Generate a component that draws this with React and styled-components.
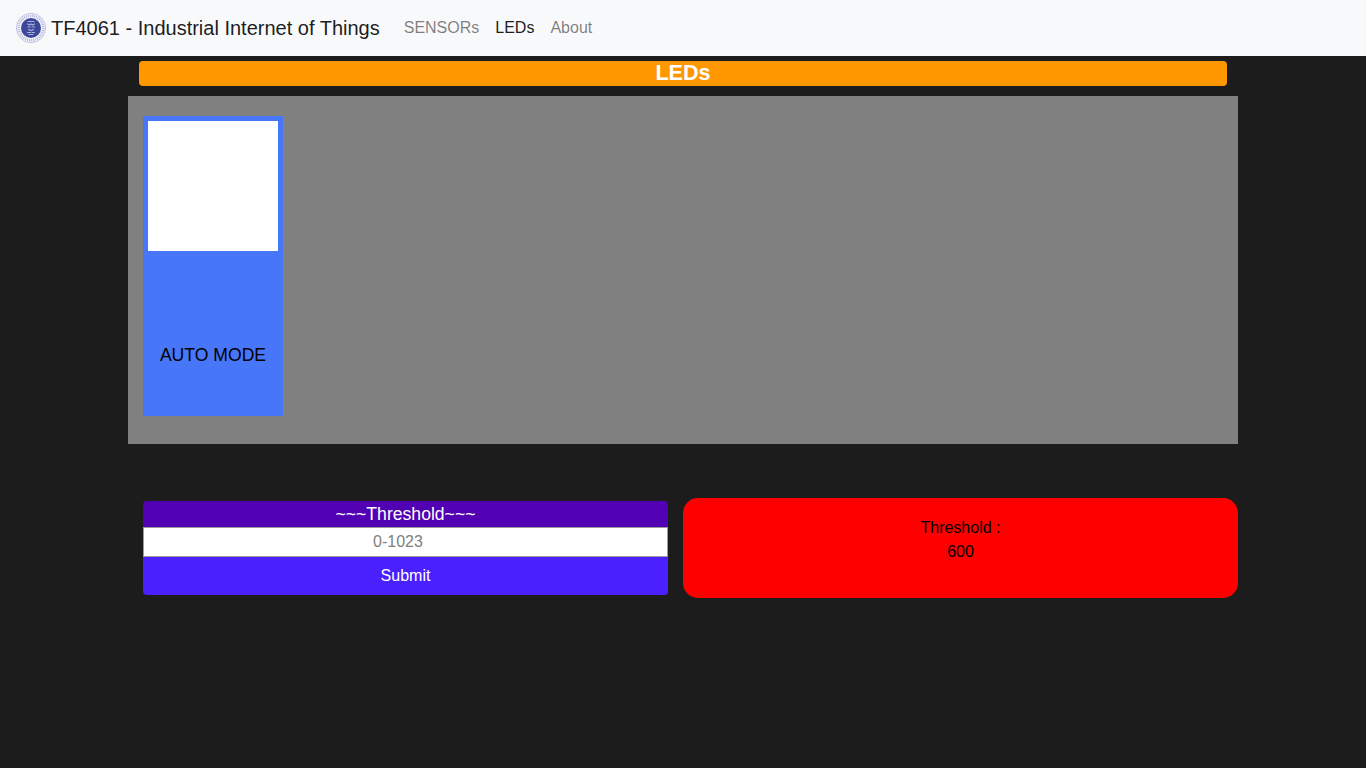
import React from "react";
import styled, { createGlobalStyle } from "styled-components";

const Global = createGlobalStyle`
  html, body { margin: 0; padding: 0; }
  body {
    background: #1c1c1c;
    min-height: 768px;
    font-family: "Liberation Sans", Arial, sans-serif;
    font-size: 16px;
    line-height: 24px;
    color: #212529;
  }
  * { box-sizing: border-box; }
`;

const Navbar = styled.nav`
  height: 56px;
  background: #f8f9fa;
  display: flex;
  align-items: center;
  padding: 0 16px;
`;
const Brand = styled.a`
  display: flex;
  align-items: center;
  gap: 5px;
  font-size: 20px;
  line-height: 30px;
  color: rgba(0, 0, 0, 0.9);
  margin-right: 16px;
`;
const NavLinks = styled.div`
  display: flex;
`;
const NavLink = styled.a`
  padding: 0 8px;
  color: ${(p) => (p.$active ? "rgba(0,0,0,0.9)" : "rgba(0,0,0,0.5)")};
`;
const Container = styled.main`
  width: 1140px;
  margin: 0 auto;
  padding: 5px 15px 0;
`;
const Banner = styled.div`
  height: 25px;
  margin: 0 11px 10px;
  background: #ff9800;
  border-radius: 4px;
  color: #fff;
  font-size: 21.6px;
  line-height: 24px;
  font-weight: 700;
  text-align: center;
`;
const Panel = styled.section`
  height: 348px;
  background: #808080;
  padding: 20px 15px;
`;
const LedCard = styled.div`
  width: 140px;
  height: 300px;
  background: #4876f8;
  padding: 5px;
  display: flex;
  flex-direction: column;
  align-items: center;
`;
const LedLight = styled.div`
  width: 130px;
  height: 130px;
  background: #fff;
`;
const LedLabel = styled.div`
  margin-top: 92px;
  font-size: 17.6px;
  line-height: 24px;
  color: #000;
`;
const Bottom = styled.section`
  display: grid;
  grid-template-columns: 525px 555px;
  column-gap: 15px;
  margin-top: 54px;
  padding-left: 15px;
`;
const Form = styled.form`
  margin-top: 3px;
  height: 94px;
  display: flex;
  flex-direction: column;
`;
const FormTitle = styled.div`
  height: 26px;
  background: #5200b3;
  border-radius: 4px 4px 0 0;
  color: #fff;
  font-size: 17.6px;
  line-height: 26px;
  text-align: center;
`;
const Input = styled.input`
  height: 30px;
  width: 100%;
  border: 1px solid #9a9a9a;
  background: #fff;
  padding: 0 15px 0 0;
  font-family: inherit;
  font-size: 16px;
  text-align: center;
  outline: none;
  &::placeholder { color: #808080; opacity: 1; }
`;
const Submit = styled.button`
  height: 38px;
  border: 0;
  background: #4a20ff;
  border-radius: 0 0 4px 4px;
  color: #fff;
  font-family: inherit;
  font-size: 16px;
  line-height: 24px;
`;
const ThresholdCard = styled.div`
  height: 100px;
  background: #ff0000;
  border-radius: 15px;
  padding-top: 18px;
  color: #000;
  text-align: center;
`;

function Logo() {
  return (
    <svg width="30" height="30" viewBox="0 0 30 30" aria-hidden="true">
      <circle cx="15" cy="15" r="14.6" fill="#f3f4fa" stroke="#a6aad2" strokeWidth="0.7" />
      <circle cx="15" cy="15" r="12.2" fill="none" stroke="#aeb2d8" strokeWidth="2.2" strokeDasharray="1 1" />
      <circle cx="15" cy="15" r="10" fill="#3c479c" />
      <path
        d="M12 8.5h6M11.5 11l2 1 1.500-1 1.500 1 2-1M12 14h2M16 14h2.500M12.500 16.500l2.500 1 2.500-1M11.500 19.500h3M16 19.500h2.500M13 21.500h4"
        fill="none"
        stroke="#a9b0da"
        strokeWidth="1.2"
        strokeLinecap="round"
      />
    </svg>
  );
}

export default function App() {
  return (
    <>
      <Global />
      <Navbar>
        <Brand>
          <Logo />
          TF4061 - Industrial Internet of Things
        </Brand>
        <NavLinks>
          <NavLink>SENSORs</NavLink>
          <NavLink $active>LEDs</NavLink>
          <NavLink>About</NavLink>
        </NavLinks>
      </Navbar>
      <Container>
        <Banner>LEDs</Banner>
        <Panel>
          <LedCard>
            <LedLight />
            <LedLabel>AUTO MODE</LedLabel>
          </LedCard>
        </Panel>
        <Bottom>
          <Form onSubmit={(e) => e.preventDefault()}>
            <FormTitle>~~~Threshold~~~</FormTitle>
            <Input placeholder="0-1023" />
            <Submit type="submit">Submit</Submit>
          </Form>
          <ThresholdCard>
            Threshold :
            <br />
            600
          </ThresholdCard>
        </Bottom>
      </Container>
    </>
  );
}
